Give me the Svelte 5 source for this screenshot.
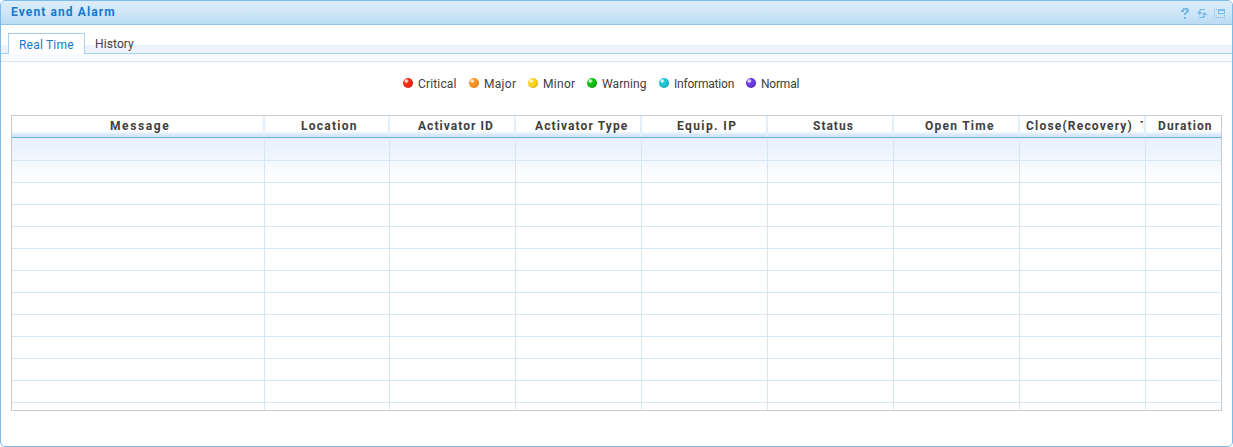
<script>
  const legend = [
    { name: 'Critical', c: '#ff2a12', d: '#c4130c', w: 66, ls: 0.15 },
    { name: 'Major', c: '#ff9320', d: '#d96c0a', w: 59, ls: 0.3 },
    { name: 'Minor', c: '#fbd21c', d: '#cf9f08', w: 59, ls: 0.3 },
    { name: 'Warning', c: '#12c012', d: '#078007', w: 72, ls: 0.1 },
    { name: 'Information', c: '#1cc4d4', d: '#0a8fa0', w: 87, ls: -0.2 },
    { name: 'Normal', c: '#6a3ce0', d: '#4420a4', w: 54, ls: -0.2 }
  ];
  const columns = [
    { name: 'Message', pad: 98, ls: 1.6 },
    { name: 'Location', pad: 36, ls: 1.25 },
    { name: 'Activator ID', pad: 28, ls: 1.05 },
    { name: 'Activator Type', pad: 19, ls: 1.1 },
    { name: 'Equip. IP', pad: 35, ls: 1.4 },
    { name: 'Status', pad: 45, ls: 1.0 },
    { name: 'Open Time', pad: 31, ls: 1.25 },
    { name: 'Close(Recovery) T', pad: 6, ls: 1.2 },
    { name: 'Duration', pad: 12, ls: 1.1 }
  ];
  const rows = Array.from({ length: 13 });
</script>

<div class="panel">
  <header>
    <h1>Event and Alarm</h1>
    <div class="tools">
      <svg class="help" width="8" height="11" viewBox="0 0 8 11" shape-rendering="crispEdges"><path d="M2 0h5v1h1v3H7v1H6v1H5v1H3V5h1V4h1V2H3v2H0V2h1V1h1zM3 9h2v2H3z" /></svg>
      <svg width="10" height="9" viewBox="0 0 10 9" shape-rendering="crispEdges"><path d="M3 0h5v1H4v1H3v1h2v1H4v1H3v1H2V5H1V4H0V3h2V1h1zM7 3h1v1h1v1h1v1H8v2H7v1H2V8h4V7h1V6H5V5h1V4h1z" /></svg>
      <svg width="11" height="9" viewBox="0 0 11 9" shape-rendering="crispEdges"><path d="M4 0h7v5H4zM5 2v2h5V2z" fill-rule="evenodd" /><path d="M0 0h1v1H0zM2 0h1v1H2zM0 2h1v1H0zM0 4h1v1H0zM0 6h1v1H0zM0 8h1v1H0zM2 8h1v1H2zM4 8h1v1H4zM6 8h1v1H6zM8 8h1v1H8zM10 8h1v1h-1zM10 6h1v1h-1z" /></svg>
    </div>
  </header>
  <nav>
    <div class="tab active">Real Time</div>
    <div class="tab">History</div>
  </nav>
  <div class="strip"></div>
  <div class="legend">
    {#each legend as item}
      <div class="item" style="width:{item.w}px;--c:{item.c};--d:{item.d};letter-spacing:{item.ls}px">
        <i></i><span>{item.name}</span>
      </div>
    {/each}
  </div>
  <div class="table">
    <div class="grid head">
      {#each columns as col}
        <div class="th" style="padding-left:{col.pad}px;letter-spacing:{col.ls}px"><span>{col.name}</span></div>
      {/each}
    </div>
    <div class="body">
      {#each rows as _}
        <div class="grid row">
          {#each columns as _}
            <div class="td"></div>
          {/each}
        </div>
      {/each}
    </div>
  </div>
</div>

<style>
  .panel {
    box-sizing: border-box;
    width: 1233px;
    height: 447px;
    border: 1px solid #7bbbe9;
    border-radius: 5px;
    overflow: hidden;
    background: #fff;
    font: 12px 'Roboto', 'Liberation Sans', sans-serif;
    color: #404040;
    white-space: nowrap;
  }
  header {
    box-sizing: border-box;
    height: 24px;
    display: flex;
    justify-content: space-between;
    background: linear-gradient(#dcecfa, #d5e9f9 30%, #bbdcf3);
    border-bottom: 1px solid #97bfea;
    padding: 0 7px 0 10px;
  }
  h1 {
    margin: 0;
    font-size: 12px;
    font-weight: 700;
    line-height: 22px;
    letter-spacing: 1.1px;
    color: #117ad0;
  }
  .tools {
    display: flex;
    gap: 7px;
    padding-top: 8px;
    fill: #7abce8;
  }
  .tools svg { display: block; }
  .tools .help {
    margin: -1px 1px 0 0;
  }
  nav {
    box-sizing: border-box;
    height: 28px;
    padding: 8px 0 0 7px;
    display: flex;
    background: linear-gradient(#fff 20px, #edf4fe 20px);
    box-shadow: 0 1px #a9cfee;
  }
  .tab {
    box-sizing: border-box;
    height: 21px;
    padding-left: 10px;
    line-height: 22px;
    letter-spacing: 0.1px;
  }
  .active {
    width: 77px;
    border: 1px solid #a9cfee;
    border-bottom: 0;
    background: #fff;
    color: #117ad0;
    letter-spacing: 0.2px;
  }
  .strip {
    height: 7px;
    margin-top: 1px;
    background: #f7faff;
    border-bottom: 1px solid #d6e6f5;
  }
  .legend {
    display: flex;
    height: 53px;
    padding-left: 402px;
  }
  .item {
    box-sizing: border-box;
    display: flex;
    flex: none;
    padding-top: 16px;
    gap: 5px;
    line-height: 12px;
  }
  .item i {
    flex: none;
    width: 10px;
    height: 10px;
    border-radius: 50%;
    background: radial-gradient(circle at 33% 30%, #fff 0, #ffffffb0 12%, transparent 27%), radial-gradient(circle at 40% 40%, var(--c) 45%, var(--d) 85%);
  }
  .table {
    box-sizing: border-box;
    width: 1211px;
    height: 296px;
    margin-left: 10px;
    border: 1px solid #c9cbcd;
    overflow: hidden;
  }
  .grid {
    display: grid;
    grid-template-columns: 253px 125px repeat(6, 126px) 75px;
  }
  .head {
    height: 21px;
    border-bottom: 1px solid #66aee4;
    background: linear-gradient(#fff 15px, #d5e7fa 19px, #d5e7fa);
    font-weight: 700;
  }
  .th {
    box-sizing: border-box;
    border-right: 2px solid #e2eefa;
    height: 21px;
    line-height: 20px;
    overflow: hidden;
  }
  .th:nth-child(8) span {
    display: block;
    width: 117px;
    overflow: hidden;
    word-spacing: 3.5px;
  }
  .body {
    height: 272px;
    overflow: hidden;
    background: linear-gradient(#e6f0fe, #f1f7fe 22px, #fff 41px);
  }
  .row { height: 22px; }
  .row:first-child { height: 23px; }
  .td {
    border-bottom: 1px solid #d5e6f5;
    border-right: 1px solid #d5e6f5;
  }
  .th:last-child, .td:last-child { border-right: 0; }
</style>
